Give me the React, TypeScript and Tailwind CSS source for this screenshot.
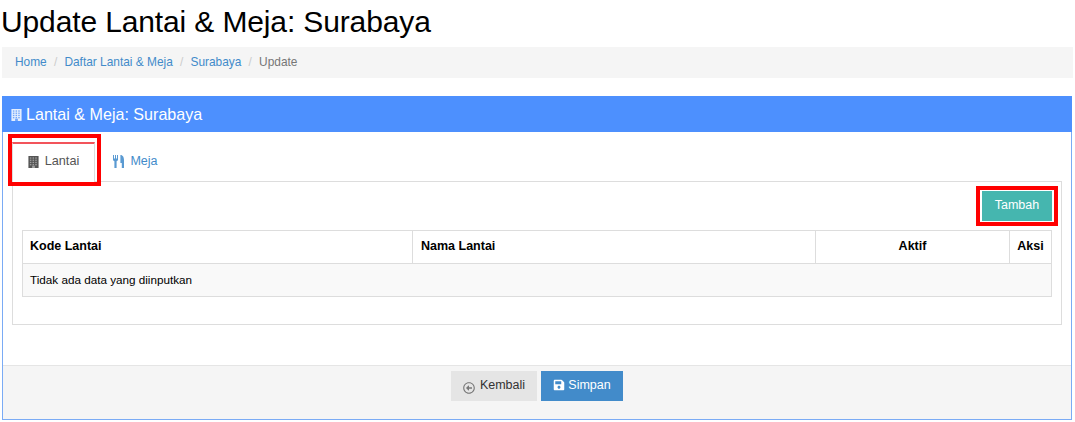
import React from "react";
import { FaSave, FaRegArrowAltCircleLeft } from "react-icons/fa";

function BuildingIcon({ className, windows }: { className: string; windows: string }) {
  const cells: React.ReactNode[] = [];
  for (let r = 0; r < 4; r++) {
    for (let c = 0; c < 3; c++) {
      cells.push(<rect key={`${r}-${c}`} x={1.6 + c * 2.9} y={1.5 + r * 2.4} width={1.6} height={1.4} fill={windows} />);
    }
  }
  return (
    <svg viewBox="0 0 11 13" className={className} fill="currentColor">
      <rect x="0" y="0" width="11" height="13" />
      {cells}
      <rect x="4" y="10.5" width="3" height="2.5" fill={windows} />
    </svg>
  );
}

function CutleryIcon({ className }: { className: string }) {
  return (
    <svg viewBox="0 0 12 13" className={className} fill="currentColor">
      <path d="M0 0h1v3.5h1V0h1v3.5h1V0h1v5.2L3.6 6.2V13H1.4V6.2L0 5.2z" />
      <path d="M7.4 0C10 0 11 2.5 11 5v8H8.8V8H7.4z" />
    </svg>
  );
}

export default function App() {
  return (
    <div className="bg-white h-[422px] overflow-hidden px-[2px] text-[12px] text-black" style={{ fontFamily: '"Liberation Sans", Arial, sans-serif' }}>
      <h1 className="text-[30px] leading-[33px] font-normal text-[#000] pt-[5px] h-[47px] -ml-[1px] tracking-[-0.13px]">Update Lantai &amp; Meja: Surabaya</h1>
      <div className="h-[31px] bg-[#f5f5f5] flex items-center pl-[13px] gap-[7.2px] text-[11.9px] mb-[18px]">
        <span className="text-[#428bca]">Home</span>
        <span className="text-[#ccc]">/</span>
        <span className="text-[#428bca]">Daftar Lantai &amp; Meja</span>
        <span className="text-[#ccc]">/</span>
        <span className="text-[#428bca]">Surabaya</span>
        <span className="text-[#ccc]">/</span>
        <span className="text-[#777]">Update</span>
      </div>
      <div className="border border-[#7aabf5] h-[324px] flex flex-col w-[1070px]">
        <div className="h-[36px] -mx-[1px] -mt-[1px] bg-[#4d90fe] text-white flex items-center pl-[9px] gap-[4px] text-[16.1px] shrink-0">
          <BuildingIcon className="w-[11px] h-[12px] mt-[1px] text-[#e4eefe]" windows="#6ea4fb" />
          <span>Lantai &amp; Meja: Surabaya</span>
        </div>
        <div className="flex-1 px-[9px] pt-[10px] relative">
          <div className="flex h-[39px] relative">
            <div className="w-[83px] h-[40px] border-t-2 border-t-[#f2545b] border-x border-x-[#ddd] bg-white flex items-center justify-center gap-[6px] z-10 text-[#555] text-[12.7px] pb-[3px]">
              <BuildingIcon className="w-[11px] h-[12px]" windows="#a0a0a0" />
              <span>Lantai</span>
            </div>
            <div className="w-[77px] flex items-center justify-center gap-[5px] text-[#428bca] text-[12.5px] pb-[1px] pl-[4px]">
              <CutleryIcon className="w-[12px] h-[13px] text-[#5a9ad2]" />
              <span>Meja</span>
            </div>
          </div>
          <div className="border border-[#ddd] h-[144px] px-[9px] pt-[9px]">
            <div className="flex justify-end">
              <div className="w-[70px] h-[30px] bg-[#45b6af] text-white flex items-center justify-center text-[12.5px] pb-[1px]">Tambah</div>
            </div>
            <table className="w-[1030px] mt-[9px] border-collapse table-fixed">
              <thead>
                <tr className="h-[33px] text-[12.5px]">
                  <th className="w-[390px] border border-[#ddd] text-left pl-[7px] font-bold pb-[1px]">Kode Lantai</th>
                  <th className="w-[403px] border border-[#ddd] text-left pl-[8px] font-bold pb-[1px]">Nama Lantai</th>
                  <th className="w-[194px] border border-[#ddd] text-center font-bold pb-[1px]">Aktif</th>
                  <th className="border border-[#ddd] text-center font-bold pb-[1px]">Aksi</th>
                </tr>
              </thead>
              <tbody>
                <tr className="h-[33px] bg-[#f9f9f9] text-[11.7px]">
                  <td colSpan={4} className="border border-[#ddd] pl-[7px]">Tidak ada data yang diinputkan</td>
                </tr>
              </tbody>
            </table>
          </div>
          <div className="absolute left-[5px] top-[2px] w-[93px] h-[52px] border-[4px] border-[#ff0000] z-20" />
          <div className="absolute left-[973px] top-[54px] w-[82px] h-[40px] border-[4px] border-[#ff0000] z-20" />
        </div>
        <div className="h-[54px] bg-[#f5f5f5] border-t border-[#e5e5e5] flex justify-center gap-[4px] pt-[5px] shrink-0">
          <div className="w-[86px] h-[30px] bg-[#e5e5e5] text-[#333] flex items-center justify-center gap-[5px] text-[12.5px]">
            <FaRegArrowAltCircleLeft className="w-[12px] h-[12px] text-[#777] mt-[3px]" />
            <span className="mb-[1px]">Kembali</span>
          </div>
          <div className="w-[82px] h-[30px] bg-[#428bca] text-white flex items-center justify-center gap-[3px] text-[12.5px]">
            <FaSave className="w-[12px] h-[12px] -mt-[2px]" />
            <span className="mb-[1px]">Simpan</span>
          </div>
        </div>
      </div>
    </div>
  );
}
